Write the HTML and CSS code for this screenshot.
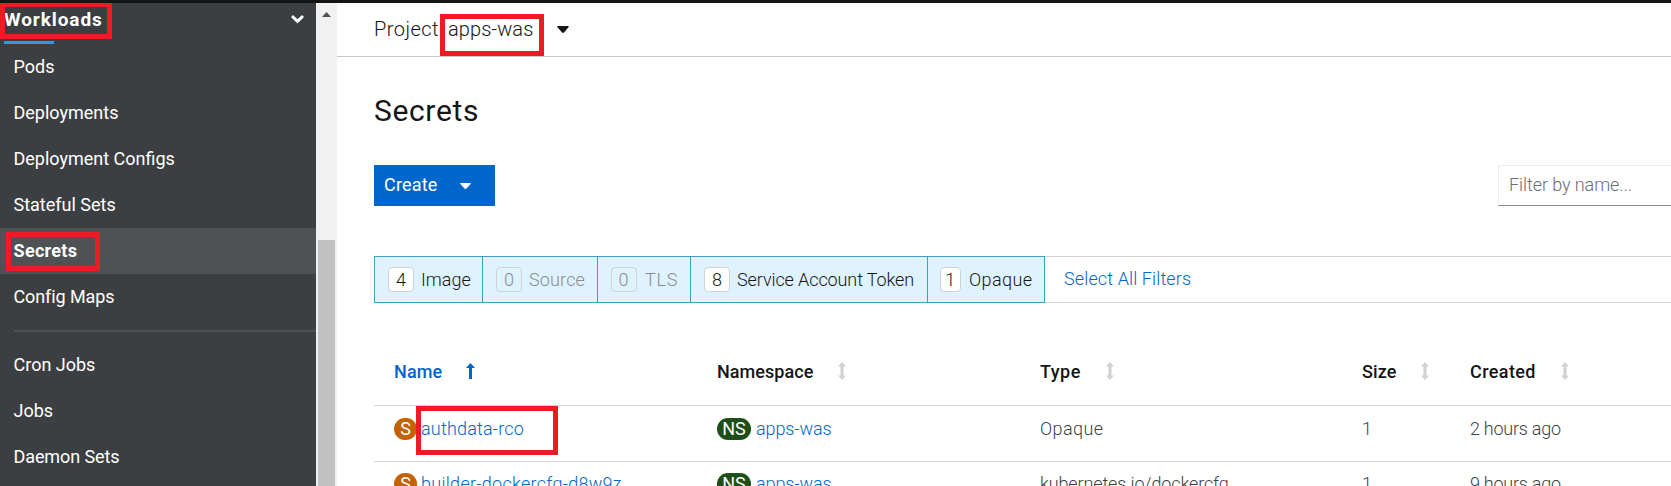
FILE: index.html
```html
<!DOCTYPE html>
<html lang="en">
<head>
<meta charset="utf-8">
<title>Secrets</title>
<link rel="stylesheet" href="styles.css">
</head>
<body>
<div class="masthead"></div>
<div class="shell">
  <nav class="sidebar">
    <div class="section"><span class="t-workloads">Workloads</span>
      <svg class="chevron" width="13" height="9" viewBox="0 0 13 9"><path d="M2 2 6.500 6.400l4.500-4.400" fill="none" stroke="#fff" stroke-width="3.100" stroke-linecap="round"/></svg>
      <i class="mark mark-workloads"></i>
    </div>
    <div class="underline"></div>
    <ul class="links">
      <li>Pods</li>
      <li>Deployments</li>
      <li>Deployment Configs</li>
      <li>Stateful Sets</li>
      <li class="active">Secrets<i class="mark mark-active"></i></li>
      <li class="tight">Config Maps</li>
      <li class="divider"></li>
      <li>Cron Jobs</li>
      <li>Jobs</li>
      <li class="tight">Daemon Sets</li>
    </ul>
  </nav>
  <div class="scrollbar">
    <svg class="scroll-up" width="9" height="5" viewBox="0 0 9 5"><path d="M0 5 4.500 0 9 5z" fill="#505050"/></svg>
    <div class="thumb"></div>
  </div>
  <main class="main">
    <header class="project">
      <span class="project-label">Project</span>
      <span class="project-name">apps-was<i class="mark mark-project"></i></span>
      <svg width="12" height="7" viewBox="0 0 12 7"><path d="M.8 0h10.400q1 .4.300 1.300L7 6.500q-1 .8-2 0L.5 1.300Q-.2.4.8 0z" fill="#151515"/></svg>
    </header>
    <h1 class="title">Secrets</h1>
    <div class="toolbar">
      <button class="create"><span>Create</span>
        <svg width="11" height="6" viewBox="0 0 11 6"><path d="M.6 0h9.800q1 .3.200 1.100L6.500 5.500q-1 .8-2 0L.4 1.100Q-.4.3.6 0z" fill="#fff"/></svg>
      </button>
      <div class="filter">Filter by name...</div>
    </div>
    <div class="chips">
      <div class="chip c-image"><b>4</b><span>Image</span></div>
      <div class="chip c-source off"><b>0</b><span>Source</span></div>
      <div class="chip c-tls off"><b>0</b><span>TLS</span></div>
      <div class="chip c-token"><b>8</b><span>Service Account Token</span></div>
      <div class="chip c-opaque"><b>1</b><span>Opaque</span></div>
      <a class="select-all">Select All Filters</a>
    </div>
    <div class="table">
      <div class="row head">
        <div class="sorted"><span class="h-name">Name</span><svg width="9" height="16" viewBox="0 0 9 16"><path d="M4.500 0 9 5H6V16H3V5H0z" fill="#06c"/></svg></div>
        <div><span class="h-ns">Namespace</span><svg width="8" height="18" viewBox="0 0 8 18"><path d="M4 0 8 4.500H5.600v9H8L4 18 0 13.500h2.400v-9H0z" fill="#d2d2d2"/></svg></div>
        <div><span class="h-type">Type</span><svg width="8" height="18" viewBox="0 0 8 18"><path d="M4 0 8 4.500H5.600v9H8L4 18 0 13.500h2.400v-9H0z" fill="#d2d2d2"/></svg></div>
        <div><span class="h-size">Size</span><svg width="8" height="18" viewBox="0 0 8 18"><path d="M4 0 8 4.500H5.600v9H8L4 18 0 13.500h2.400v-9H0z" fill="#d2d2d2"/></svg></div>
        <div><span class="h-created">Created</span><svg width="8" height="18" viewBox="0 0 8 18"><path d="M4 0 8 4.500H5.600v9H8L4 18 0 13.500h2.400v-9H0z" fill="#d2d2d2"/></svg></div>
      </div>
      <div class="row">
        <div class="marked"><em class="badge s">S</em><a class="n1">authdata-rco</a><i class="mark mark-secret"></i></div>
        <div><em class="badge ns">NS</em><a class="n-ns">apps-was</a></div>
        <div class="v-opaque">Opaque</div>
        <div>1</div>
        <div class="v-age">2 hours ago</div>
      </div>
      <div class="row last">
        <div><em class="badge s">S</em><a class="n2">builder-dockercfg-d8w9z</a></div>
        <div><em class="badge ns">NS</em><a class="n-ns">apps-was</a></div>
        <div class="v-type">kubernetes.io/dockercfg</div>
        <div>1</div>
        <div class="v-age">9 hours ago</div>
      </div>
    </div>
  </main>
</div>
</body>
</html>
```
FILE: styles.css
```css
* { box-sizing: border-box; }
body { margin: 0; height: 486px; overflow: hidden; background: #fff; color: #151515; font: 300 18px/22px Roboto, "Liberation Sans", sans-serif; white-space: nowrap; }
svg { display: block; flex: none; }
.masthead { height: 3px; background: #151515; }
.shell { display: flex; height: 483px; overflow: hidden; }

/* Red outlines laid over the highlighted items */
.mark { position: absolute; border: 5px solid #ed1c24; }
.mark-workloads { left: 0; top: -1px; width: 112px; height: 37px; }
.mark-active { left: 6px; top: 4px; width: 94px; height: 39px; }
.mark-project { left: -8px; top: -4px; width: 104px; height: 42px; }
.mark-secret { left: 22px; top: 0; width: 142px; height: 49px; }

.sidebar { width: 316px; background: #3c3f42; color: #fff; font-weight: 400; }
.section { position: relative; display: flex; justify-content: space-between; align-items: center; height: 33px; padding: 0 12px 0 4px; font-weight: 700; font-size: 19px; }
.t-workloads { letter-spacing: .9px; }
.chevron { margin-top: -1px; }
.underline { width: 50px; height: 3px; margin: 5px 0 0 4px; background: #3993e5; }
.links { margin: 0; padding: 0; list-style: none; }
.links li { position: relative; height: 46px; padding-left: 13.5px; line-height: 46px; }
.links li.tight { letter-spacing: -.1px; }
.links li.active { background: #4f5255; font-weight: 700; letter-spacing: .3px; }
.links li.divider { height: 2px; margin: 10px 0 10px 14px; background: #4f5255; }

.scrollbar { width: 21px; padding: 9px 2px 0; background: #f1f1f1; }
.scroll-up { margin: 0 auto; }
.thumb { width: 17px; height: 246px; margin-top: 223px; background: #c1c1c1; }

.main { flex: 1; min-width: 0; overflow: hidden; }
.project { display: flex; align-items: center; height: 54px; padding: 0 0 1px 37px; border-bottom: 1px solid #c7c7c7; font-size: 20px; }
.project-label { width: 74px; letter-spacing: .45px; }
.project-name { position: relative; width: 109px; letter-spacing: .08px; }
.title { margin: 34px 0 0 37px; font: 400 30px/40px Roboto, sans-serif; letter-spacing: .65px; }
.toolbar { display: flex; justify-content: space-between; margin: 34px 0 0 37px; }
.create { display: flex; align-items: center; gap: 22px; width: 121px; height: 41px; padding: 0 0 1px 10px; border: 0; background: #06c; color: #fff; font: 400 18px/22px Roboto, sans-serif; letter-spacing: .2px; }
.create svg { margin-top: 2px; }
.filter { width: 173px; height: 41px; padding-left: 10px; border: 1px solid #ededed; border-right: 0; border-bottom-color: #8a8d90; color: #6a6e73; line-height: 37px; letter-spacing: -.08px; }

.chips { display: flex; height: 47px; margin: 50px 0 0 37px; border: 1px solid #d2d2d2; border-width: 1px 0; }
.chip { display: flex; align-items: center; height: 47px; margin-top: -1px; padding: 0 0 1px 12px; border: 1px solid #419fc5; border-left-width: 0; background: #def2ff; }
.chip b { width: 26px; height: 25px; margin-right: 7px; border: 1px solid #d2d2d2; border-radius: 4px; background: #fff; font-weight: 300; line-height: 24px; text-align: center; }
.chip span { padding-top: 1px; }
.off { color: #8a8d90; }
.off b { background: transparent; }
.c-image { width: 109px; padding-left: 13px; border-left-width: 1px; }
.c-source { width: 115px; padding-left: 13px; letter-spacing: .15px; }
.c-tls { width: 93px; padding-left: 13px; letter-spacing: .8px; }
.c-tls span { padding-left: 1px; }
.c-token { width: 237px; padding-left: 13px; letter-spacing: -.1px; }
.c-opaque { width: 117px; letter-spacing: .4px; }
.c-opaque b { width: 21px; margin-right: 8px; }
.select-all { margin-left: 19px; color: #06c; line-height: 43px; letter-spacing: .12px; }

.table { margin: 58px 0 0 37px; }
.row { display: grid; grid-template-columns: 323px 323px 322px 108px 1fr; height: 56px; padding: 12px 0 0 20px; border-bottom: 1px solid #d2d2d2; color: #3c3f42; }
.row > div { display: flex; align-items: center; height: 22px; }
.row a { color: #06c; }
.head { height: 45px; padding-top: 0; color: #151515; font-weight: 500; }
.head > div { gap: 25px; }
.head svg { margin-top: -3px; }
.head .sorted { gap: 24px; color: #06c; }
.h-name { letter-spacing: .15px; }
.h-ns { letter-spacing: .05px; }
.h-type { letter-spacing: .5px; }
.h-size { letter-spacing: .1px; }
.h-created { letter-spacing: .4px; }
.last { padding-top: 11px; }
.badge { height: 22px; margin-right: 5px; border-radius: 11px; color: #fff; font-style: normal; font-weight: 400; text-align: center; line-height: 22px; }
.s { width: 23px; margin-right: 4px; background: #c46100; }
.ns { width: 34px; background: #1e4f18; }
.marked { position: relative; }
.row .mark-secret { top: -12px; }
.n1 { letter-spacing: .19px; }
.n2 { letter-spacing: .29px; }
.n-ns { letter-spacing: -.1px; }
.v-opaque { letter-spacing: .4px; }
.v-type { letter-spacing: -.12px; }
.v-age { letter-spacing: -.25px; }
```
